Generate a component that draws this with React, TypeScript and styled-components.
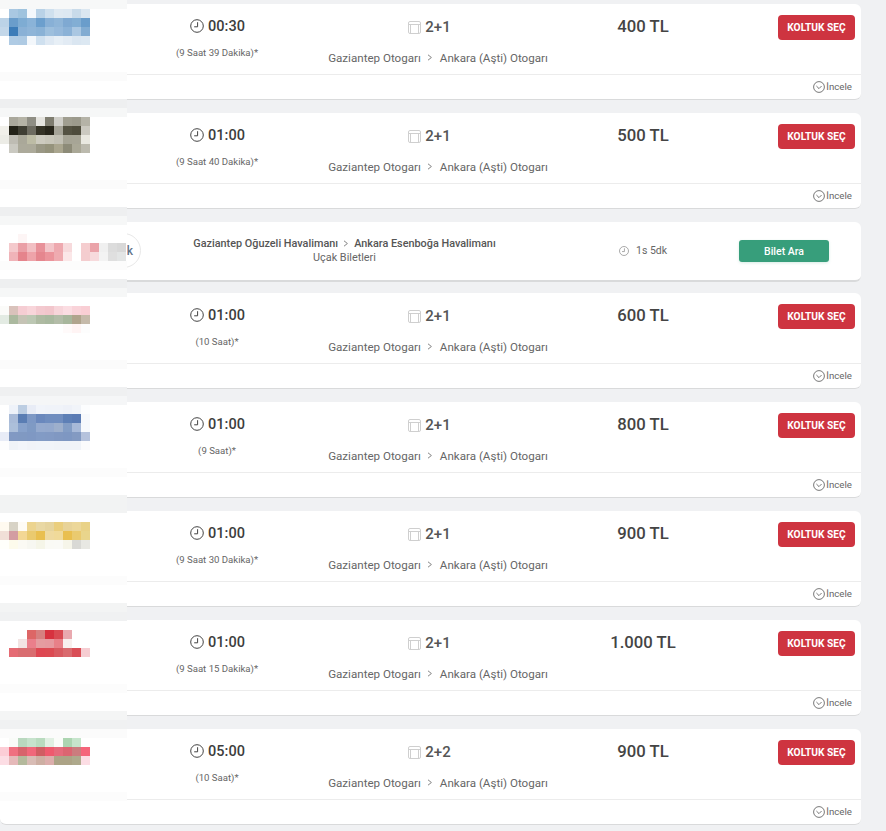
import React from "react";
import styled, { createGlobalStyle } from "styled-components";

const GlobalStyle = createGlobalStyle`
  html, body {
    margin: 0;
    padding: 0;
    background: #f0f1f3;
    font-family: Roboto, "Liberation Sans", sans-serif;
  }
`;

const Page = styled.div`
  position: relative;
  width: 886px;
  height: 831px;
  padding-top: 4px;
  box-sizing: border-box;
  overflow: hidden;
`;

const Card = styled.div`
  width: 861px;
  height: 96px;
  margin-bottom: 13px;
  box-sizing: border-box;
  display: flex;
  flex-direction: column;
  background: #fff;
  border-radius: 6px;
  border-bottom: 1px solid #d9dadb;
`;

const Main = styled.div`
  height: 71px;
  flex: none;
  box-sizing: border-box;
  display: grid;
  grid-template-columns: 127px 180px 262px 148px 1fr;
  padding-right: 6px;
  border-bottom: 1px solid #ececec;
`;

const Column = styled.div`
  display: flex;
  flex-direction: column;
  align-items: center;
`;

const TimeRow = styled.div`
  display: flex;
  align-items: center;
  gap: 4px;
  height: 20px;
  margin-top: 12px;
  margin-left: 1px;
  font-size: 14.5px;
  font-weight: 500;
  color: #3d3d3d;
`;

const Duration = styled.div`
  margin-top: 11px;
  font-size: 9.6px;
  line-height: 12px;
  color: #666;
`;

const SeatRow = styled.div`
  display: flex;
  align-items: center;
  gap: 4px;
  height: 20px;
  margin-top: 13px;
  margin-right: 17px;
  font-size: 15px;
  font-weight: 500;
  color: #555;
`;

const Route = styled.div`
  display: flex;
  align-items: center;
  gap: 6.5px;
  margin-top: 13.5px;
  font-size: 11.6px;
  line-height: 14px;
  color: #666;
`;

const Price = styled.div`
  margin-top: 13px;
  font-size: 16.7px;
  line-height: 20px;
  font-weight: 500;
  color: #444;
`;

const ButtonCell = styled.div`
  display: flex;
  justify-content: flex-end;
  align-items: flex-start;
`;

const SelectButton = styled.button`
  width: 77px;
  height: 25px;
  margin-top: 11px;
  padding: 0;
  border: 0;
  border-radius: 4px;
  background: #ce3440;
  color: #fff;
  font-family: inherit;
  font-size: 10.2px;
  font-weight: 700;
`;

const Footer = styled.div`
  flex: 1;
  display: flex;
  justify-content: flex-end;
  align-items: center;
  gap: 1px;
  padding-right: 9px;
  padding-bottom: 1px;
  font-size: 9.7px;
  color: #666;
`;

const AdCard = styled(Card)`
  position: relative;
  height: 60px;
  margin-bottom: 11px;
  display: grid;
  grid-template-columns: 127px 435px 130px 1fr;
  align-items: center;
  padding-bottom: 1px;
  border-bottom: 2px solid #d9dadb;
`;

const ArrowCircle = styled.div`
  position: absolute;
  left: 106px;
  top: 11px;
  width: 35px;
  height: 35px;
  box-sizing: border-box;
  display: flex;
  align-items: center;
  justify-content: center;
  padding-left: 13px;
  border: 1px solid #e8e8e8;
  border-radius: 50%;
  background: #fff;
  font-size: 12px;
  font-weight: 500;
  color: #5f7388;
`;

const AdText = styled.div`
  display: flex;
  flex-direction: column;
  align-items: center;
  font-size: 10.85px;
  line-height: 14px;
  color: #666;
`;

const AdRoute = styled.div`
  display: flex;
  align-items: center;
  gap: 5px;
  font-weight: 500;
  color: #555;
`;

const AdDuration = styled.div`
  display: flex;
  align-items: center;
  gap: 7px;
  padding-left: 57px;
  font-size: 10.5px;
  color: #666;
`;

const SearchButton = styled.button`
  width: 90px;
  height: 22px;
  margin-top: 1px;
  margin-left: 47px;
  padding: 0;
  border: 0;
  border-radius: 3px;
  background: #379e7b;
  box-shadow: 0 1px 3px rgba(55, 158, 123, 0.2);
  color: #fff;
  font-family: inherit;
  font-size: 10.5px;
  font-weight: 500;
`;

// blurred carrier logos sit over the left end of the cards
const Mask = styled.div`
  position: absolute;
  left: 0;
  top: 0;
  width: 127px;
  display: flex;
  flex-direction: column;
  background: #fff;
`;

const MaskRow = styled.div<{ $color: string }>`
  display: flex;
  height: 9px;
  background: ${(p) => p.$color};
`;

const MaskCell = styled.div<{ $color: string }>`
  width: 9px;
  height: 9px;
  background: ${(p) => p.$color};
`;

const ClockIcon = ({ size = 14, color = "#444" }: { size?: number; color?: string }) => (
  <svg width={size} height={size} viewBox="0 0 14 14" fill="none" stroke={color} strokeWidth="1">
    <circle cx="7" cy="7" r="6.3" />
    <path d="M7.6 3.2V7.8H4.2" />
  </svg>
);

const SeatIcon = () => (
  <svg width="13" height="13" viewBox="0 0 13 13" fill="none" stroke="#cfcfcf" strokeWidth="1">
    <rect x="0.5" y="0.5" width="12" height="12" rx="1.5" />
    <path d="M0.5 3.5H12.5M2.5 3.5V12.5M10.5 3.5V12.5" />
  </svg>
);

const ChevronCircle = () => (
  <svg width="12" height="12" viewBox="0 0 12 12" fill="none" stroke="#555" strokeWidth="0.8">
    <circle cx="6" cy="6" r="5.4" />
    <path d="M3.4 5L6 7.6L8.6 5" />
  </svg>
);

const Chevron = () => (
  <svg width="6" height="7" viewBox="0 0 6 7" fill="none" stroke="#777" strokeWidth="0.9">
    <path d="M1 0.8L4.4 3.5L1 6.2" />
  </svg>
);

const W = "#fff";
const BAND_DARK = "#eeeff0";
const BAND_MID = "#f6f7f7";
const BAND_FAINT = "#fbfbfb";

const bands: Record<number, string> = {
  0: "#f7f8f8",
  8: BAND_FAINT,
  11: BAND_DARK,
  12: BAND_MID,
  20: BAND_FAINT,
  23: BAND_DARK,
  24: BAND_MID,
  29: "#fcfcfc",
  31: BAND_DARK,
  32: BAND_MID,
  40: BAND_FAINT,
  43: "#eff0f1",
  44: "#f5f6f7",
  52: "#fcfcfc",
  55: "#f2f3f3",
  56: "#f2f3f3",
  64: "#fcfcfc",
  67: "#f3f4f4",
  68: "#f0f1f2",
  76: "#fcfcfc",
  79: "#f4f5f5",
  80: "#f0f1f2",
  81: BAND_FAINT,
  88: "#fcfcfc",
};

const logoRows: Record<number, string[]> = {
  1: [W, "#a9c8e2", "#9fc3de", "#f4f8fc", "#b9d2e7", "#cfe0ee", "#dfe9f2", "#dde8f2", "#c9dbea", "#dbe7f1"],
  2: ["#bcd3e7", "#6a9dcb", "#7eacd3", "#8ab3d8", "#6c9fcd", "#88b0d6", "#8fb5d8", "#7fa9d2", "#82aed4", "#6a9dcb"],
  3: ["#c3d7e9", "#3c7cb8", "#8ab1d6", "#8fb5d8", "#8ab2d6", "#9dbfdd", "#96b9db", "#8bb2d7", "#aac7e2", "#82acd2"],
  4: [W, "#afcbe4", "#aecae3", "#f3f7fb", "#cfe0ef", "#dfe9f3", "#e7eff6", "#e2ebf4", "#dae6f1", "#dce8f2"],
  13: [W, "#aaa89c", "#b5b3a6", "#8f8e84", "#e5e4df", "#7f7d70", "#d0cfc9", "#a09e90", "#9c9a8c", "#b5b3a7"],
  14: ["#f1f0ea", "#232218", "#3f3e33", "#6d6b60", "#353326", "#28261b", "#a5a397", "#545242", "#4e4c3c", "#cbc9c0"],
  15: ["#ecece6", "#bebcb3", "#aaa899", "#bdbca5", "#cdcbbf", "#c8c6b9", "#c2c0b4", "#a6a495", "#a7a596", "#e9e8e0"],
  16: [W, "#cac9c1", "#acaa9b", "#acaa9a", "#9a9885", "#95937c", "#aaa68f", "#8d8b78", "#aaa897", "#bcbaae"],
  26: [W, W, "#fdf5f5"],
  27: [W, "#f4c9cc", "#ea9fa6", "#f2bfc3", "#e89199", "#f3c5c9", "#eea9af", "#f7dadc", W, "#f5cdcf", "#eaa3a9", "#f0f0f0", "#dcdcdc", "#d8d8d8"],
  28: [W, "#f0b3b8", "#e5848c", "#eea3a9", "#e5868e", "#eb949b", "#efabb0", "#fbe7e8", W, "#f4cdcf", "#f7dadc", "#f3f3f3", "#dfdfdf", "#e3e5e5"],
  34: ["#fbfbf9", "#d9c2bb", "#f5cdd3", "#f8d5da", "#f3c9cf", "#f2c6cc", "#f7d5da", "#fbdde2", "#f9d3d9", "#f9ced4"],
  35: ["#e3ebe3", "#abb99f", "#c5c3b5", "#bcc7b3", "#aebaa2", "#a9b89f", "#b3bca8", "#a8b69c", "#b0a48d", "#c5baaa"],
  36: [W, W, W, W, W, W, W, "#fffafa", "#fff4f4", "#fdfdfd"],
  45: [W, "#eef2f9", "#bccde2", "#e8ecf6", "#f1f4fa", "#f0f3f9", "#f0f3f9", "#eef1f8", "#f1f4f9", "#fcfdfe"],
  46: [W, "#a9bbd8", "#5a7db3", "#7d98c5", "#6a88bd", "#6f8dbf", "#6f8dbf", "#5d7fb6", "#5a7bb4", "#f7f9fc"],
  47: [W, "#acbfda", "#88a2cb", "#7f9ac4", "#95aace", "#94a9cd", "#9dafcc", "#839dc5", "#a7b9d8", "#f7f9fc"],
  48: ["#e8ecf7", "#8199c3", "#8099c2", "#7f98c3", "#829bc5", "#829ac4", "#8098c2", "#7e97c2", "#839ac2", "#b5c2dc"],
  49: ["#fdfdfe", "#f0f3f8", "#f3f5fa", "#f1f3f8", "#f1f4f9", "#f1f4f9", "#f0f3f8", "#f0f3f8", "#f0f3f8", "#fbfbfc"],
  58: ["#fffaf0", "#d8d3c6", "#fefbf5", "#ecd48f", "#e9d8a4", "#e6d49e", "#eace7d", "#e8d398", "#ecd799", "#e9d287"],
  59: ["#f1dfd7", "#d39da2", "#f3d795", "#eaca6f", "#e9bf4f", "#efdaa0", "#f0da9a", "#e9bf4f", "#eaca6f", "#e9d58c"],
  60: ["#fffffb", "#fdfbec", "#fbfaf4", "#f7f7f1", "#f5f5e8", "#fafaf5", "#fafaf6", "#f6f5e9", "#d9d9d5", "#e8e8e3"],
  70: [W, W, W, "#dd6666", "#d68080", "#d7323f", "#d94a52", "#e9a9af", W, W],
  71: [W, W, "#f2e4e3", "#ea7f8b", "#e59ca0", "#e6999f", "#e88088", "#f8f0ee", W, W],
  72: [W, "#e56b74", "#d96d70", "#d96d70", "#de4752", "#dc4a52", "#d85a60", "#d96a6e", "#d94e56", "#f6cdd2"],
  82: [W, "#f9fbf8", "#b9d8bf", "#c6e2cc", "#b9dbbf", "#e1f0e3", "#fafcf9", "#acd5b1", "#c6e5cc", W],
  83: ["#fccdd6", "#ef7080", "#d7636c", "#f0677a", "#d05d63", "#ee5a6e", "#e56a7b", "#db6571", "#cb7c7e", "#f5657a"],
  84: ["#fcdde4", "#e5b9b9", "#b4b99c", "#d8bcb5", "#cdafa3", "#dcaeac", "#aca386", "#aca386", "#aea98c", "#fcdde4"],
};

interface Trip {
  time: string;
  duration: string;
  seats: string;
  price: string;
}

const firstTrips: Trip[] = [
  { time: "00:30", duration: "(9 Saat 39 Dakika)*", seats: "2+1", price: "400 TL" },
  { time: "01:00", duration: "(9 Saat 40 Dakika)*", seats: "2+1", price: "500 TL" },
];

const otherTrips: Trip[] = [
  { time: "01:00", duration: "(10 Saat)*", seats: "2+1", price: "600 TL" },
  { time: "01:00", duration: "(9 Saat)*", seats: "2+1", price: "800 TL" },
  { time: "01:00", duration: "(9 Saat 30 Dakika)*", seats: "2+1", price: "900 TL" },
  { time: "01:00", duration: "(9 Saat 15 Dakika)*", seats: "2+1", price: "1.000 TL" },
  { time: "05:00", duration: "(10 Saat)*", seats: "2+2", price: "900 TL" },
];

const TripCard = ({ trip }: { trip: Trip }) => (
  <Card>
    <Main>
      <div />
      <Column>
        <TimeRow>
          <ClockIcon />
          {trip.time}
        </TimeRow>
        <Duration>{trip.duration}</Duration>
      </Column>
      <Column>
        <SeatRow>
          <SeatIcon />
          {trip.seats}
        </SeatRow>
        <Route>
          Gaziantep Otogarı
          <Chevron />
          Ankara (Aşti) Otogarı
        </Route>
      </Column>
      <Column>
        <Price>{trip.price}</Price>
      </Column>
      <ButtonCell>
        <SelectButton>KOLTUK SEÇ</SelectButton>
      </ButtonCell>
    </Main>
    <Footer>
      <ChevronCircle />
      İncele
    </Footer>
  </Card>
);

const App = () => {
  const rows = Array.from({ length: 91 }, (_, i) => i);

  return (
    <Page>
      <GlobalStyle />
      {firstTrips.map((trip) => (
        <TripCard key={trip.price} trip={trip} />
      ))}
      <AdCard>
        <ArrowCircle>k</ArrowCircle>
        <div />
        <AdText>
          <AdRoute>
            Gaziantep Oğuzeli Havalimanı
            <Chevron />
            Ankara Esenboğa Havalimanı
          </AdRoute>
          Uçak Biletleri
        </AdText>
        <AdDuration>
          <ClockIcon size={10} color="#888" />
          1s 5dk
        </AdDuration>
        <SearchButton>Bilet Ara</SearchButton>
      </AdCard>
      {otherTrips.map((trip, i) => (
        <TripCard key={i} trip={trip} />
      ))}
      <Mask>
        {rows.map((r) => (
          <MaskRow key={r} $color={bands[r] || W}>
            {(logoRows[r] || []).map((color, c) => (
              <MaskCell key={c} $color={color} />
            ))}
          </MaskRow>
        ))}
      </Mask>
    </Page>
  );
};

export default App;
